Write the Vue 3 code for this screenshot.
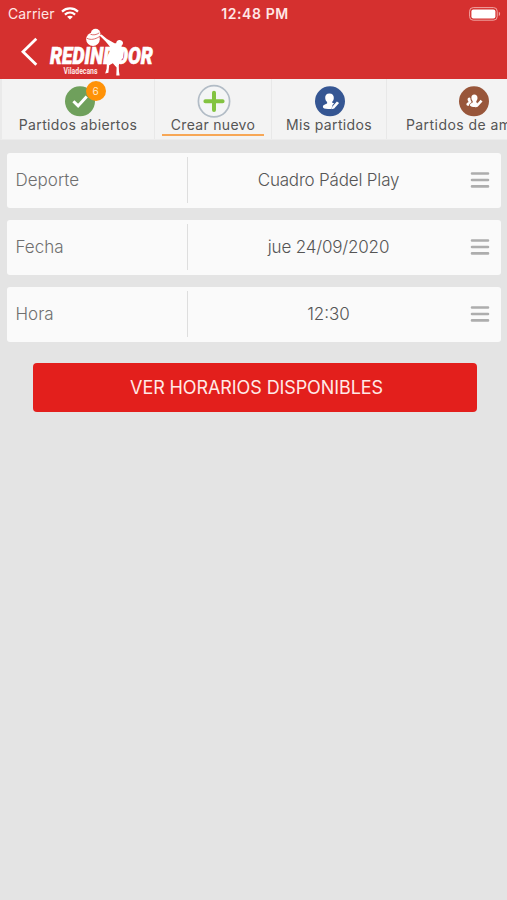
<script setup>
const tabs = [
  { label: 'Partidos abiertos', icon: 'check', cls: 'open', badge: 6 },
  { label: 'Crear nuevo', icon: 'plus', cls: 'create', active: true },
  { label: 'Mis partidos', icon: 'user', cls: 'mine' },
  { label: 'Partidos de amigos', icon: 'users', cls: 'friends' },
]
const fields = [
  { label: 'Deporte', value: 'Cuadro Pádel Play', cls: 'sport' },
  { label: 'Fecha', value: 'jue 24/09/2020', cls: 'date' },
  { label: 'Hora', value: '12:30', cls: 'time' },
]
</script>

<template>
  <div class="screen">
    <header class="header">
      <div class="status">
        <div class="carrier">
          <span>Carrier</span>
          <svg width="18" height="13" viewBox="0 0 18 13" fill="none" stroke="#fff" stroke-width="2.2">
            <path d="M1 4.6C5.5.4 12.5.4 17 4.6" />
            <path d="M3.9 7.6c3-2.7 7.2-2.7 10.2 0" />
            <path d="M9 12.6 6.1 9.7c1.7-1.4 4.1-1.4 5.8 0Z" fill="#fff" stroke="none" />
          </svg>
        </div>
        <span class="clock">12:48 PM</span>
        <svg class="battery" width="32" height="14" viewBox="0 0 32 14">
          <rect x=".6" y=".6" width="27.6" height="12.6" rx="3.6" fill="none" stroke="#f0a5a3" stroke-width="1" />
          <rect x="2.4" y="2.4" width="24" height="9" rx="2" fill="#fff" />
          <path d="M29.8 4.8c1.8.6 1.8 3.6 0 4.2Z" fill="#f0a5a3" />
        </svg>
      </div>
      <div class="brand">
        <svg class="back" width="20" height="30" viewBox="0 0 20 30" fill="none" stroke="#fff" stroke-width="2.8">
          <path d="M16.3 1.7 3 14.7 16.3 27.8" />
        </svg>
        <svg class="logo" width="120" height="52" viewBox="0 0 120 52" fill="#fff">
          <text class="logo-name" x="10" y="40.4" textLength="103" lengthAdjust="spacingAndGlyphs">REDINDOOR</text>
          <text class="logo-place" x="23.5" y="49.6" textLength="34" lengthAdjust="spacingAndGlyphs">Viladecans</text>
          <circle cx="55.6" cy="9.6" r="4.8" />
          <circle cx="53" cy="15.2" r="6.8" />
          <path d="M47 14.3c4 2 8 1 12.3-1.6M50.5 10.3c3 1 6 .6 8.8-1.5" fill="none" stroke="#d32f2f" stroke-width=".7" />
          <path d="M59 11 61.5 10.5 67 15 74.5 19.2 76.2 19.2c0-2 1.4-3.5 3.6-3.3 2.4.2 3.8 2.2 3 4.2-.4 1.2-1.4 2-1.4 2L84 27l-1 7-3.4 4-.8 3.6.2 6 .6 4h-3.3l.3-8-3.8-4.4-3.6 2-.8 7.6-3.2.6 1.4-4.6.2-4.6L65.4 38l2-6 2-4 .4-5.5-4.4-5.2Z" />
        </svg>
      </div>
    </header>

    <nav class="tabs">
      <div v-for="tab in tabs" :key="tab.label" class="tab" :class="[tab.cls, { active: tab.active }]">
        <div class="tab-icon">
          <svg v-if="tab.icon === 'check'" width="34" height="34" viewBox="0 0 34 34">
            <circle cx="17" cy="17.3" r="15" fill="#6fa05c" />
            <path d="m10.4 17.3 4.7 4.6 8.6-9.3" fill="none" stroke="#fff" stroke-width="3" />
          </svg>
          <svg v-else-if="tab.icon === 'plus'" width="34" height="34" viewBox="0 0 34 34">
            <circle cx="17" cy="17.3" r="15.6" fill="#f4f5f6" stroke="#b2bcc6" stroke-width="1.7" />
            <path d="M17 8.7v17.2M8.4 17.3h17.2" stroke="#83c341" stroke-width="4" stroke-linecap="round" />
          </svg>
          <svg v-else-if="tab.icon === 'user'" width="34" height="34" viewBox="0 0 34 34">
            <circle cx="17" cy="17.3" r="15" fill="#355693" />
            <path d="M16.4 9.4c-2.9 0-4.4 1.8-4.2 4.5.1 1.8.9 3.2 1.9 4v1.6c-1.6.9-4.2 1.2-4.2 3.4 0 1.3 1.8 2 5.2 2h3.4l1-3.8 1.6-1.8-1.9-.6v-1c1-.9 1.5-2.1 1.6-3.8.2-2.6-1.5-4.5-4.4-4.5Z" fill="#fff" />
            <path d="m19.3 22.8 4.6-5.4 2.2 1.7-4.9 5.4-2.6.8Z" fill="#fff" />
          </svg>
          <svg v-else width="34" height="34" viewBox="0 0 34 34">
            <circle cx="17" cy="17.3" r="15" fill="#98563a" />
            <path d="M17.3 10.6c-2 0-3.1 1.4-2.9 3.4.1 1.4.6 2.5 1.3 3.1v1.3c-1.2.7-2.8 1-2.8 2.7 0 1.2 1.4 1.8 3.4 1.8h2.4l2.1-3.9-1.5-.6v-1.3c.8-.7 1.1-1.7 1.2-3.1.1-2-1.2-3.4-3.2-3.4ZM12.4 13.4c-1.3 0-2 1-1.8 2.3.1.8.4 1.4.8 1.8v.8c-.9.5-2 .9-2 2.1 0 .8.8 1.2 2.6 1.3.1-1.8 1.2-2.6 2.4-3.3v-1.1c-.6-.7-1-1.6-1-3.3Z" fill="#fff" />
            <path d="m18.8 21.2 4.8-5.4 1.9 1.6-4.8 5.4-2.4.7Z" fill="#fff" />
          </svg>
          <span v-if="tab.badge" class="badge">{{ tab.badge }}</span>
        </div>
        <span class="tab-label">{{ tab.label }}</span>
      </div>
    </nav>

    <main class="form">
      <div v-for="field in fields" :key="field.label" class="field">
        <div class="field-label">{{ field.label }}</div>
        <div class="field-value" :class="field.cls"><span>{{ field.value }}</span></div>
        <svg class="menu" width="20" height="18" viewBox="0 0 20 18" stroke="#adadad" stroke-width="2.6" stroke-linecap="round">
          <path d="M2 2.5h16M2 9h16M2 15.4h16" />
        </svg>
      </div>
      <button class="submit"><span>VER HORARIOS DISPONIBLES</span></button>
    </main>
  </div>
</template>

<style>
body {
  background: #e4e4e4;
}
</style>

<style scoped>
.screen {
  width: 507px;
  height: 900px;
  overflow: hidden;
  background: #e4e4e4;
  font-family: Inter, "Liberation Sans", sans-serif;
  box-sizing: border-box;
}
.header {
  height: 79px;
  background: #d5302f;
  color: #fff;
}
.status {
  display: grid;
  grid-template-columns: 1fr auto 1fr;
  align-items: center;
  height: 27px;
  padding: 0 5px 0 8px;
  font-size: 14px;
  line-height: 27px;
  color: #ffe6e5;
}
.carrier {
  display: flex;
  align-items: center;
  gap: 6px;
  letter-spacing: 0.1px;
}
.clock {
  font-weight: 600;
  font-size: 14px;
  letter-spacing: 0.6px;
}
.battery {
  justify-self: end;
  margin-right: 1px;
}
.brand {
  display: flex;
  align-items: flex-start;
}
.back {
  margin: 10px 0 0 20px;
}
.logo {
  margin-top: -3px;
}
.logo-name {
  font: italic 900 23px Roboto, "Liberation Sans", sans-serif;
  stroke: #fff;
  stroke-width: 0.6px;
}
.logo-place {
  font: 700 9px Roboto, "Liberation Sans", sans-serif;
  fill: #ffe6e5;
}
.tabs {
  display: flex;
  height: 61px;
  overflow: hidden;
  background: #f3f3f3;
  border-bottom: 1px solid #ececec;
  border-left: 2px solid #eaeaea;
  box-sizing: border-box;
}
.tab {
  flex: none;
  display: flex;
  flex-direction: column;
  align-items: center;
  box-sizing: border-box;
  padding-top: 5px;
  border-right: 1px solid #e8e8e8;
}
.open {
  width: 153px;
}
.create {
  width: 117px;
}
.mine {
  width: 115px;
}
.friends {
  width: 174px;
}
.tab-icon {
  position: relative;
  height: 34px;
  width: 34px;
}
.open .tab-icon {
  margin-left: 3px;
}
.create .tab-icon {
  margin-left: 1px;
}
.mine .tab-icon {
  margin-left: 1px;
}
.tab-icon svg {
  display: block;
}
.badge {
  position: absolute;
  left: 23px;
  top: -3px;
  width: 20px;
  height: 20px;
  border-radius: 50%;
  background: #ff9207;
  color: #ffe9cd;
  font-size: 10px;
  line-height: 20px;
  text-align: center;
}
.tab-label {
  height: 18px;
  margin-top: -2px;
  font-size: 14px;
  line-height: 17px;
  letter-spacing: 0.36px;
  white-space: nowrap;
  color: #555;
}
.create .tab-label {
  padding: 0 9px;
  letter-spacing: 0.3px;
  border-bottom: 2px solid #f7a756;
}
.friends .tab-label {
  letter-spacing: 0.45px;
}
.form {
  display: flex;
  flex-direction: column;
  gap: 12px;
  padding: 12.5px 6px 0 7px;
}
.field {
  display: flex;
  align-items: center;
  height: 55.2px;
  background: #fafafa;
  border-radius: 3px;
}
.field-label {
  width: 181px;
  height: 46px;
  box-sizing: border-box;
  padding-left: 8.5px;
  border-right: 1px solid #dedede;
  line-height: 47px;
  font-size: 17px;
  font-weight: 300;
  color: #6f6f6f;
}
.field-value {
  width: 281px;
  height: 44px;
  text-align: center;
  font-size: 17px;
  font-weight: 300;
  line-height: 44px;
  letter-spacing: -0.18px;
  color: #555;
}
.time {
  letter-spacing: 0;
}
.menu {
  margin: -1px 0 0 1px;
}
.submit {
  width: 444px;
  height: 49px;
  margin: 9px 0 0 25.5px;
  padding: 0 0 0 4px;
  border: 0;
  border-radius: 4px;
  background: #e31f1c;
  color: #ffe9e6;
  font-family: inherit;
  font-size: 18px;
  letter-spacing: -0.1px;
}
</style>
